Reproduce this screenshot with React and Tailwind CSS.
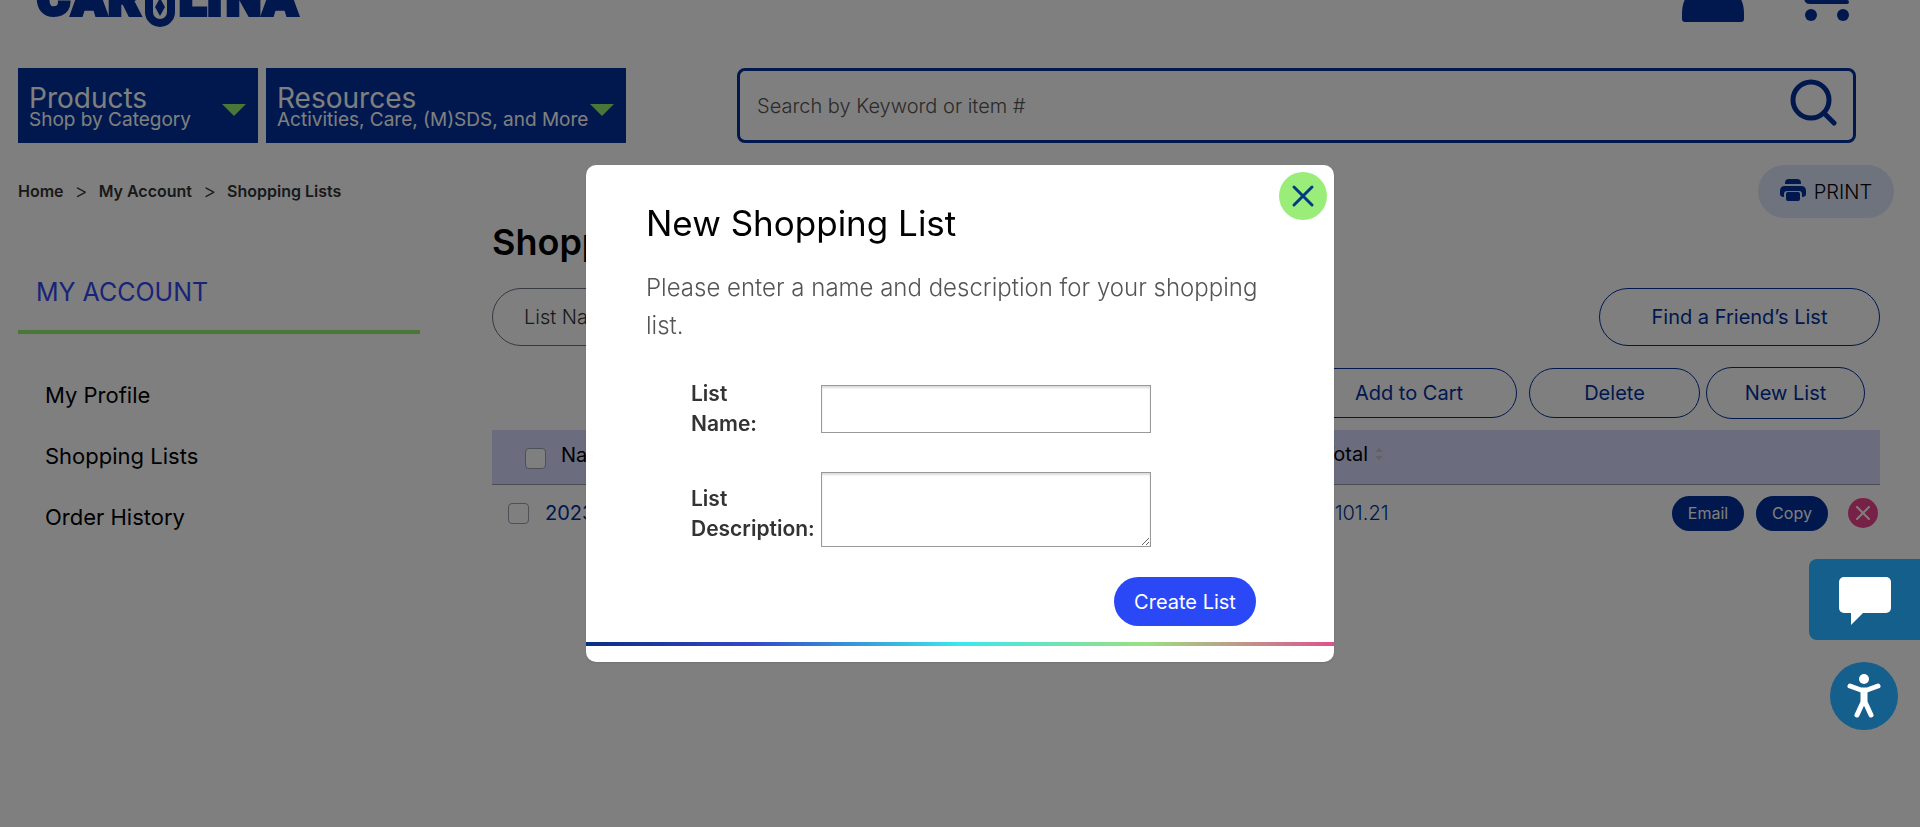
import React, { useState } from 'react';

const navLinks = ['My Profile', 'Shopping Lists', 'Order History'];
const crumbs = ['Home', 'My Account', 'Shopping Lists'];

const menus = [
  { title: 'Products', text: 'Shop by Category', width: 'w-60' },
  { title: 'Resources', text: 'Activities, Care, (M)SDS, and More', width: 'w-90' },
];

const outlineBtn = 'flex items-center justify-center rounded-full border border-[#00309c] text-[#00309c]';
const checkbox = 'size-[21px] appearance-none rounded border border-gray-400 bg-white checked:bg-[#00309c]';
const field = 'w-[330px] border border-[#999] px-2 shadow-[inset_0_2px_2px_#ddd]';

function Logo() {
  return (
    <svg width="264" height="64" viewBox="0 0 264 64" role="img" aria-label="Carolina" className="text-[#00309c]">
      <g
        fill="currentColor"
        stroke="currentColor"
        strokeWidth="4"
        fontFamily="Roboto, sans-serif"
        fontWeight="900"
        fontSize="50"
      >
        <text x="1 36 72" y="51">CAR</text>
        <text x="143 171 190 227" y="51">LINA</text>
      </g>
      <path d="M113 22v26a11 11 0 0 0 22 0V22" fill="none" stroke="currentColor" strokeWidth="8" />
      <path d="M124 34l5 9-5 9-5-9z" fill="currentColor" />
    </svg>
  );
}

function Header() {
  return (
    <header className="pl-[18px] pr-16">
      <div className="-mt-9 flex items-start justify-between pl-[18px] pr-1">
        <a href="#home"><Logo /></a>
        <div className="flex gap-14 text-[#00309c]">
          <a href="#account" aria-label="Account">
            <svg width="62" height="60" viewBox="0 0 62 60" fill="currentColor">
              <circle cx="31" cy="10" r="10" />
              <path d="M0 55V50C0 30 12 22 31 22s31 8 31 28v5q0 3-3 3H3q-3 0-3-3z" />
            </svg>
          </a>
          <a href="#cart" aria-label="Cart">
            <svg width="52" height="60" viewBox="0 0 52 60">
              <path d="M0 4h6l6 22-5 7q-2 5 3 5h37M10 10h38l-6 16H12" fill="none" stroke="currentColor" strokeWidth="4" strokeLinecap="round" />
              <circle cx="11" cy="51" r="6" fill="currentColor" />
              <circle cx="43" cy="51" r="6" fill="currentColor" />
            </svg>
          </a>
        </div>
      </div>
      <div className="mt-10 flex">
        <nav className="flex gap-2">
          {menus.map((menu) => (
            <button
              key={menu.title}
              className={`${menu.width} flex h-[75px] items-center justify-between bg-[#00309c] pl-[11px] pr-3 text-left text-white`}
            >
              <span className="whitespace-nowrap">
                <span className="block text-[28px] leading-7">{menu.title}</span>
                <span className="block text-[19px] leading-4">{menu.text}</span>
              </span>
              <svg width="24" height="12" viewBox="0 0 24 12" className="mt-2 shrink-0 text-[#95ed70]">
                <path d="M0 0h24L12 12z" fill="currentColor" />
              </svg>
            </button>
          ))}
        </nav>
        <form className="ml-[111px] flex h-[75px] flex-1 items-center rounded-lg border-3 border-[#00309c] pl-[17px] pr-4">
          <input
            type="search"
            aria-label="Search"
            placeholder="Search by Keyword or item #"
            className="min-w-0 flex-1 bg-transparent text-xl font-light outline-none placeholder:text-[#555]"
          />
          <button type="button" aria-label="Search" className="text-[#00309c]">
            <svg width="48" height="56" viewBox="0 0 48 56" fill="none" stroke="currentColor" strokeWidth="5">
              <circle cx="22" cy="22" r="18" />
              <path d="M35 35l10 10" strokeLinecap="round" />
            </svg>
          </button>
        </form>
      </div>
    </header>
  );
}

function Sidebar() {
  return (
    <aside className="w-[402px] shrink-0 pt-[58px]">
      <h2 className="border-b-4 border-[#95ed70] pb-[22px] pl-[18px] text-[25px] leading-8 text-[#3347ef]">MY ACCOUNT</h2>
      <ul className="mt-[43px] pl-[27px] text-[22px]">
        {navLinks.map((name) => (
          <li key={name} className="h-[61px] leading-9">
            <a href="#account">{name}</a>
          </li>
        ))}
      </ul>
    </aside>
  );
}

function ListTable() {
  return (
    <table className="mt-[11px] w-full text-left text-xl">
      <thead>
        <tr className="h-[54px] border-b border-[#99a] bg-[#d6d9fc]">
          <th className="w-[760px] pb-1 pl-[33px] font-normal">
            <span className="flex items-center gap-[15px]">
              <input type="checkbox" aria-label="Select all lists" className={`${checkbox} mt-2`} />
              <span>Name</span>
            </span>
          </th>
          <th className="pb-1.5 pl-[70px] font-normal">
            <span className="flex items-center gap-1.5">
              Total
              <svg width="10" height="14" viewBox="0 0 10 14" className="text-[#c5c7c0]">
                <path d="M1 5l4-4 4 4zM1 9l4 4 4-4z" fill="currentColor" />
              </svg>
            </span>
          </th>
          <th className="w-60" aria-label="Actions"></th>
        </tr>
      </thead>
      <tbody>
        <tr className="h-[58px]">
          <td className="pl-4">
            <span className="flex items-center gap-4">
              <input type="checkbox" aria-label="Select list 2023" className={checkbox} />
              <a href="#list" className="text-[#00309c]">2023</a>
            </span>
          </td>
          <td className="pl-[70px] font-light text-[#00309c]">$101.21</td>
          <td>
            <div className="flex items-center justify-end gap-3 pr-0.5 text-base text-white">
              <button className="h-[35px] w-18 rounded-full bg-[#00309c]">Email</button>
              <button className="h-[35px] w-18 rounded-full bg-[#00309c]">Copy</button>
              <button aria-label="Remove list" className="ml-2 size-[30px] rounded-full bg-[#f0438c]">
                <svg width="30" height="30" viewBox="0 0 30 30" stroke="currentColor" strokeWidth="2" strokeLinecap="round">
                  <path d="M9 9l12 12M21 9L9 21" />
                </svg>
              </button>
            </div>
          </td>
        </tr>
      </tbody>
    </table>
  );
}

function Lists() {
  return (
    <main className="min-w-0 flex-1 pl-18 pr-10">
      <h1 className="text-[36px] font-semibold leading-12">Shopping Lists</h1>
      <div className="mt-[22px] flex justify-between">
        <input
          aria-label="List name"
          placeholder="List Name"
          className="h-[58px] w-100 rounded-full border border-gray-500 px-[31px] text-xl font-light placeholder:text-[#333]"
        />
        <button className={`${outlineBtn} h-[58px] w-[281px] text-xl`}>Find a Friend’s List</button>
      </div>
      <div className="mt-[21px] flex items-center justify-end pr-[15px] text-xl">
        <button className={`${outlineBtn} mr-3 h-[50px] w-[216px]`}>Add to Cart</button>
        <button className={`${outlineBtn} mr-1.5 h-[50px] w-[171px]`}>Delete</button>
        <button className={`${outlineBtn} h-[52px] w-[159px]`}>New List</button>
      </div>
      <ListTable />
    </main>
  );
}

function NewListDialog({ onClose }) {
  return (
    <div className="fixed inset-0 flex items-center justify-center bg-black/50">
      <div role="dialog" aria-labelledby="dialog-title" className="relative w-[748px] rounded-[10px] bg-white pb-4 shadow">
        <button
          onClick={onClose}
          aria-label="Close"
          className="absolute right-[7px] top-[7px] flex size-12 items-center justify-center rounded-full bg-[#9bed79] text-[#003a85]"
        >
          <svg width="24" height="24" viewBox="0 0 24 24" stroke="currentColor" strokeWidth="3" strokeLinecap="round">
            <path d="M3 3l18 18M21 3L3 21" />
          </svg>
        </button>
        <div className="px-15 pt-[34px]">
          <h2 id="dialog-title" className="text-[35px] leading-12">New Shopping List</h2>
          <p className="mt-[22px] text-2xl font-light leading-[38px] text-[#555]">
            Please enter a name and description for your shopping list.
          </p>
          <div className="mt-[34px] pl-[45px] text-[21px] font-semibold leading-[30px] text-[#333]">
            <div className="flex items-center">
              <label htmlFor="list-name" className="w-[130px]">List<br />Name:</label>
              <input id="list-name" className={`${field} h-12`} />
            </div>
            <div className="mt-[33px] flex items-center">
              <label htmlFor="list-desc" className="w-[130px] pt-2">List<br />Description:</label>
              <textarea id="list-desc" className={`${field} h-[75px]`} />
            </div>
          </div>
          <div className="mt-[30px] flex justify-end pr-[18px]">
            <button className="h-[49px] w-[142px] rounded-full bg-[#2a48f5] text-xl text-white">Create List</button>
          </div>
        </div>
        <div className="mt-4 h-1 bg-linear-[90deg,#0a2f80,#3347c8_22%,#3be8ee_50%,#9bdf80_75%,#e05090]" />
      </div>
    </div>
  );
}

export default function App() {
  const [open, setOpen] = useState(true);

  return (
    <div className="min-h-screen overflow-hidden bg-white font-[Inter,sans-serif] text-black">
      <Header />
      <div className="mt-[22px] flex items-start justify-between pl-[18px] pr-[26px]">
        <nav className="flex h-[52px] items-center gap-[11px] text-base font-semibold text-[#333]">
          {crumbs.map((name, i) => (
            <React.Fragment key={name}>
              {i > 0 && <span className="text-xl font-light">&gt;</span>}
              <a href="#home">{name}</a>
            </React.Fragment>
          ))}
        </nav>
        <button className="flex h-[53px] w-[136px] items-center justify-center gap-2 rounded-full bg-[#dfe6fa] text-xl font-light">
          <svg width="26" height="22" viewBox="0 0 26 22" className="-mt-1 text-[#00309c]" fill="currentColor">
            <path d="M5 5V4q0-4 4-4h8q4 0 4 4v1z" />
            <path d="M5 7h16q5 0 5 5v3q0 3-4 3v-3q0-3-3-3H7q-3 0-3 3v3q-4 0-4-3v-3q0-5 5-5z" />
            <rect x="6" y="13" width="14" height="9" rx="2" />
          </svg>
          PRINT
        </button>
      </div>
      <div className="flex pl-[18px]">
        <Sidebar />
        <Lists />
      </div>

      {open && <NewListDialog onClose={() => setOpen(false)} />}

      <div className="fixed bottom-[97px] right-0 flex flex-col items-end gap-[22px]">
        <button aria-label="Chat" className="flex h-[81px] w-[111px] items-center justify-center rounded-l-lg bg-[#155f8d] pt-1 text-white">
          <svg width="52" height="50" viewBox="0 0 52 50" fill="currentColor">
            <rect width="52" height="36" rx="5" />
            <path d="M12 35v13l13-13z" />
          </svg>
        </button>
        <button aria-label="Accessibility" className="mr-[22px] size-[68px] rounded-full bg-[#155f8d] text-white">
          <svg width="68" height="68" viewBox="0 0 68 68" fill="none" stroke="currentColor" strokeWidth="5" strokeLinecap="round" strokeLinejoin="round">
            <circle cx="34" cy="17" r="5" fill="currentColor" stroke="none" />
            <path d="M20 24l11 4h6l11-4" />
            <path d="M33 29v11l-6 13M35 29v11l6 13" />
          </svg>
        </button>
      </div>
    </div>
  );
}
